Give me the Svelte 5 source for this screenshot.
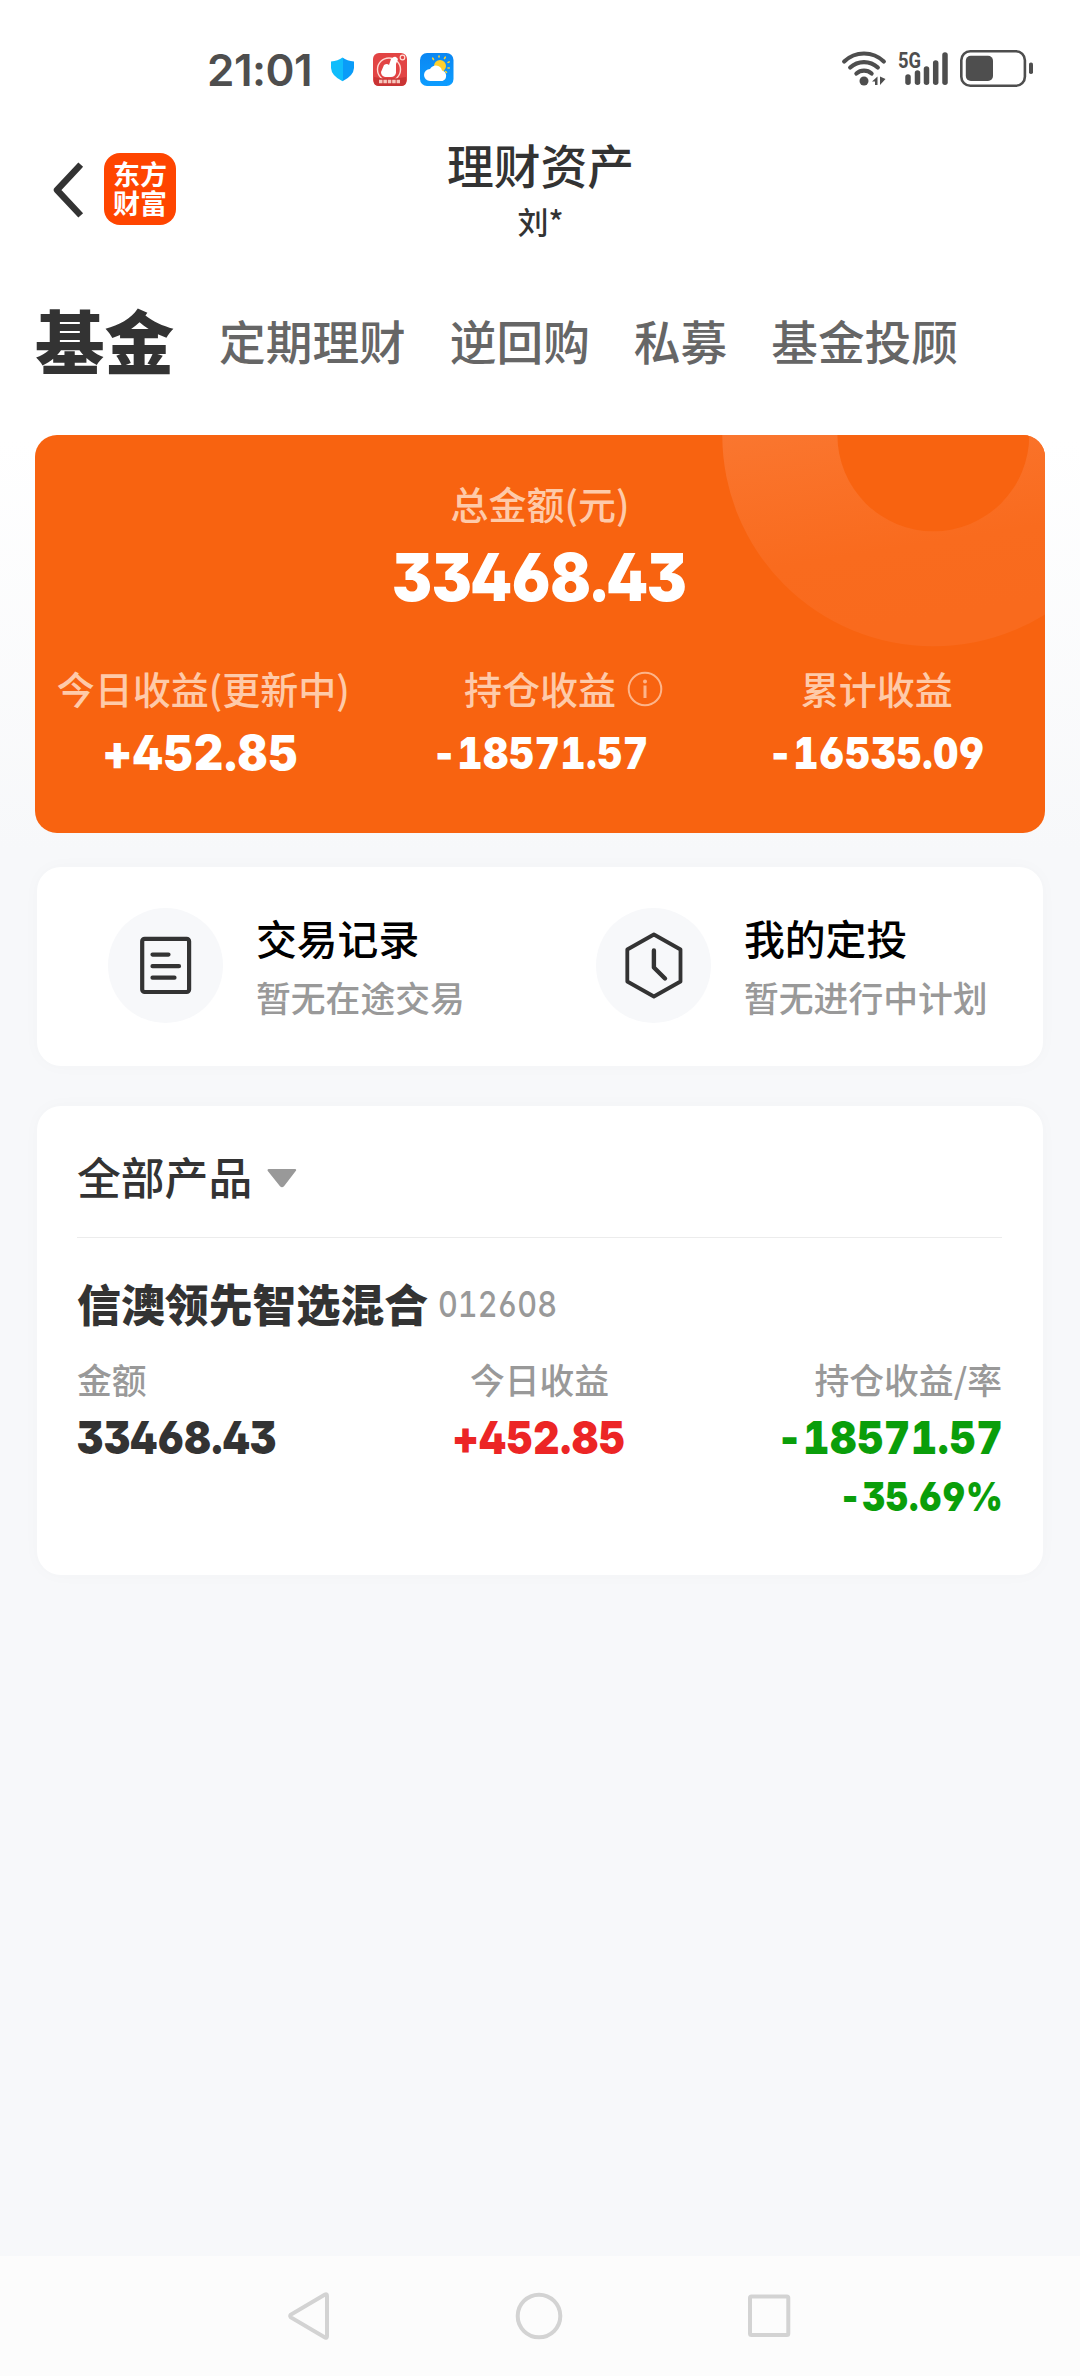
<script>
  const tabs = ['定期理财', '逆回购', '私募', '基金投顾'];
  const bars = [
    { x: 908, top: 77 },
    { x: 917.5, top: 73 },
    { x: 926.5, top: 69 },
    { x: 935.7, top: 63 },
    { x: 945, top: 55 }
  ];
</script>

<div class="screen">
  <div class="status">
    <span class="time num">21:01</span>
    <svg class="apps" width="130" height="44" viewBox="326 48 130 44">
      <defs>
        <linearGradient id="sh" x1="0" x2="1"><stop offset=".5" stop-color="#10bdfb" /><stop offset=".5" stop-color="#0a9cf8" /></linearGradient>
        <linearGradient id="sky" x1="0" y1="0" x2="0" y2="1"><stop offset="0" stop-color="#0a86f2" /><stop offset="1" stop-color="#0d9dff" /></linearGradient>
      </defs>
      <path d="M342.500 57.500Q347 61 354 61.500V68Q353.500 76 342.500 81.200Q331.500 76 331 68V61.500Q338 61 342.500 57.500Z" fill="url(#sh)" />
      <rect x="373" y="53" width="34" height="33" rx="6" fill="#e24444" />
      <circle cx="389" cy="69.500" r="11.500" fill="none" stroke="#ffd9d3" stroke-width="1.400" />
      <path d="M384 65q3-2 5 0l2-6q3-3 5-2l2 2-2 5v9q-1 4-5 4h-6q-4-1-4-5z" fill="#fff" />
      <path d="M374 77q15 3 32 0v6q-1 3-5 3h-22q-4 0-5-3z" fill="#c93434" />
      <path d="M379 81.500h21" stroke="#f7c7bd" stroke-width="3.500" stroke-dasharray="3.500 .9" />
      <circle cx="402.500" cy="57.500" r="2.300" fill="none" stroke="#ffe0d8" stroke-width="1.200" />
      <rect x="420" y="53" width="33.500" height="33" rx="7" fill="url(#sky)" />
      <circle cx="440" cy="66" r="6" fill="#ffd02d" />
      <g stroke="#ffd02d" stroke-width="1.600" stroke-linecap="round"><path d="M439 57v-1M444.500 58.500l.8-1.300M448 62.500l1.200-.6M448 68h1.300M445.500 71.500l1 .8M433.500 59.500l-.8-1.300" /></g>
      <path d="M430 81a6 6 0 0 1 0-12q2-3.500 6-3.500 5 .5 6 5a5.500 5.500 0 0 1 .5 10.500z" fill="#fff" />
    </svg>
    <svg class="sys" width="204" height="48" viewBox="836 46 204 48">
      <g fill="none" stroke="#4e4e4e" stroke-width="4.200" stroke-linecap="round">
        <path d="M844.200 61.500a28.500 28.500 0 0 1 39.600 0M850.200 67.600a20 20 0 0 1 27.600 0M856.400 73.500a11.500 11.500 0 0 1 15.200 0" />
      </g>
      <circle cx="864" cy="81" r="4.500" fill="#4e4e4e" />
      <path d="M872 81.500l5.500-5v8.500h-2.500v-3.500zM880 76.500l5.500 2.500-5.500 6z" fill="#4e4e4e" />
      <text x="898" y="68" class="net" textLength="23" lengthAdjust="spacingAndGlyphs">5G</text>
      {#each bars as b}
        <path d={`M${b.x} ${b.top}V82.300`} stroke="#4e4e4e" stroke-width="5.500" stroke-linecap="round" />
      {/each}
      <rect x="961.300" y="51.200" width="63.600" height="34.600" rx="9" fill="none" stroke="#4e4e4e" stroke-width="2.600" />
      <rect x="965.800" y="55.800" width="27.200" height="25.200" rx="5" fill="#4e4e4e" />
      <rect x="1029" y="62.500" width="4" height="11.500" rx="1.800" fill="#4e4e4e" />
    </svg>
  </div>

  <header>
    <svg class="back" width="36" height="60" viewBox="50 160 36 60"><path d="M78.500 167L57 190L78.500 213" fill="none" stroke="#333" stroke-width="6.500" stroke-linecap="square" stroke-linejoin="round" /></svg>
    <div class="logo">东方<br />财富</div>
    <div class="title">
      <h1>理财资产</h1>
      <p>刘*</p>
    </div>
  </header>

  <nav class="tabs">
    <strong>基金</strong>
    {#each tabs as t}<span>{t}</span>{/each}
  </nav>

  <main>
    <section class="total">
      <svg class="rings" width="324" height="212" viewBox="0 0 324 212">
        <defs><linearGradient id="ring" x1="0" y1=".5" x2=".08" y2="1"><stop offset="0" stop-color="#fa762f" /><stop offset=".65" stop-color="#f96b1e" /><stop offset="1" stop-color="#f96a1d" /></linearGradient></defs>
        <circle cx="212" cy="0" r="211.700" fill="url(#ring)" />
        <circle cx="212" cy="0" r="96.200" fill="#f86310" />
      </svg>
      <div class="label">总金额(元)</div>
      <div class="sum num">33468.43</div>
      <div class="cols">
        <div><div class="label">今日收益(更新中)</div><div class="val num big">+452.85</div></div>
        <div>
          <div class="label held">持仓收益<svg class="info" width="36" height="36" viewBox="0 0 36 36"><circle cx="18" cy="18" r="16.300" fill="none" stroke="#fdb48a" stroke-width="2" /><path d="M18 14.500V27" stroke="#fdb48a" stroke-width="3" /><circle cx="18" cy="10.500" r="2" fill="#fdb48a" /></svg></div>
          <div class="val num">-18571.57</div>
        </div>
        <div><div class="label">累计收益</div><div class="val num">-16535.09</div></div>
      </div>
    </section>

    <section class="card quick">
      <div class="item">
        <div class="disc">
          <svg width="60" height="70" viewBox="136 931 60 70" fill="none" stroke="#333" stroke-width="4.200" stroke-linecap="round"><rect x="142.200" y="938.800" width="46.900" height="53.200" rx="2.500" /><path d="M152.500 954.600h16M152.500 966.200h26.500M152.500 977.700h22" /></svg>
        </div>
        <div><div class="name">交易记录</div><div class="sub">暂无在途交易</div></div>
      </div>
      <div class="item">
        <div class="disc">
          <svg width="68" height="70" viewBox="619.500 931 68 70" fill="none" stroke="#333" stroke-width="3.800" stroke-linecap="round" stroke-linejoin="round"><path d="M653.400 934.500L680 949.500V981.500L653.400 996.500L626.800 981.500V949.500Z" /><path d="M653.400 950.500V967.500L664.500 978.500" stroke-width="4.400" /></svg>
        </div>
        <div><div class="name">我的定投</div><div class="sub">暂无进行中计划</div></div>
      </div>
    </section>

    <section class="card products">
      <div class="filter">全部产品<svg width="30" height="19" viewBox="0 0 30 19"><path d="M1.500 0h26.500q2 .3.700 2L17 17.300q-2 1.800-4 0L.8 2Q0 .5 1.500 0z" fill="#999" /></svg></div>
      <div class="fund"><b>信澳领先智选混合</b><span class="num">012608</span></div>
      <div class="grid">
        <div><div class="key">金额</div><div class="fig num">33468.43</div></div>
        <div class="mid"><div class="key">今日收益</div><div class="fig num up">+452.85</div></div>
        <div class="end"><div class="key">持仓收益/率</div><div class="fig num down">-18571.57</div><div class="pct num">-35.69%</div></div>
      </div>
    </section>
  </main>

  <footer>
    <svg width="50" height="56" viewBox="284 2288 50 56"><path d="M325 2294.500Q327 2293.500 327 2296V2336Q327 2338.500 325 2337.500L291 2317.500Q289.500 2316 291 2314.500Z" fill="none" stroke="#d3d3d3" stroke-width="4" /></svg>
    <svg width="50" height="56" viewBox="515 2288 50 56"><circle cx="540" cy="2316" r="21.300" fill="none" stroke="#d3d3d3" stroke-width="4" /></svg>
    <svg width="50" height="56" viewBox="744 2288 50 56"><rect x="750" y="2296.500" width="38.300" height="38.600" rx="1.500" fill="none" stroke="#d3d3d3" stroke-width="4" /></svg>
  </footer>
</div>

<style>
  :global(body) { margin: 0; background: #f7f8fa; }
  .screen {
    width: 1080px;
    height: 2376px;
    display: flex;
    flex-direction: column;
    overflow: hidden;
    font-family: 'Noto Sans CJK SC', sans-serif;
    color: #333;
    background: linear-gradient(#fff 0, #fff 440px, #f7f8fa 850px);
  }
  svg { display: block; flex: none; }
  .num { font-family: Inter, 'Noto Sans CJK SC', sans-serif; font-feature-settings: 'ss01', 'cv02', 'cv03', 'cv04'; white-space: nowrap; }
  /* Condensed tabular figures */
  .sum, .val, .fig, .pct, .fund span { font-feature-settings: 'ss01', 'cv02', 'cv03', 'cv04', 'tnum'; font-weight: 900; letter-spacing: 0.02em; transform: scaleX(0.88); }

  .status { height: 140px; box-sizing: border-box; padding: 46px 40px 0 207px; display: flex; align-items: flex-start; color: #4e4e4e; }
  .time { width: 119px; font-size: 44px; line-height: 48px; font-weight: 600; letter-spacing: -0.5px; }
  .apps { margin-top: 2px; }
  .sys { margin-left: auto; }
  .net { font: 700 22px Roboto, sans-serif; fill: #4e4e4e; }

  header { height: 150px; display: grid; grid-template-columns: 54px 212px 1fr 315px; padding-left: 50px; box-sizing: border-box; }
  .back { margin-top: 20px; }
  .logo { width: 72px; height: 72px; margin-top: 13px; border-radius: 16px; background: #ff4500; color: #fff; box-sizing: border-box; padding-top: 6px; text-align: center; font-size: 27px; line-height: 29px; font-weight: 700; }
  .title { text-align: center; }
  h1 { margin: -3px 0 0; font-size: 46.8px; line-height: 54px; font-weight: 500; }
  p { margin: 14px 0 0; font-size: 31px; line-height: 32px; font-weight: 500; }

  .tabs { height: 145px; box-sizing: border-box; padding-left: 35px; display: flex; align-items: flex-start; font-size: 46.700px; line-height: 60px; color: #666; font-weight: 500; }
  .tabs strong { width: 184px; padding-top: 2px; font-size: 69.500px; line-height: 94px; color: #333; font-weight: 900; }
  .tabs span { margin: 20px 44px 0 0; }

  main { flex: 1; padding: 0 35px; }
  .total { position: relative; height: 398px; border-radius: 22px; background: #f86310; overflow: hidden; color: #fff; text-align: center; padding-top: 43px; box-sizing: border-box; }
  .rings { position: absolute; right: 0; top: 0; width: 323px; }
  .total > .label, .total > .sum, .cols { position: relative; }
  .label { font-size: 38px; line-height: 50px; color: #fecaa9; white-space: nowrap; font-weight: 500; }
  .sum { font-size: 66px; line-height: 70px; margin-top: 14px; transform: scaleX(0.91); letter-spacing: 0.015em; }
  .cols { display: grid; grid-template-columns: repeat(3, 1fr); margin-top: 51px; }
  .held { position: relative; }
  .info { position: absolute; left: 255px; top: 8px; }
  .val { font-size: 44px; line-height: 60px; margin-top: 10px; }
  .val.big { font-size: 48px; transform: scaleX(0.94); letter-spacing: 0.03em; margin-left: -5px; }

  .card { margin: 0 2px; background: #fff; border-radius: 24px; box-shadow: 0 0 18px rgba(0, 0, 0, 0.025); box-sizing: border-box; }
  .quick { height: 199px; margin-top: 34px; display: grid; grid-template-columns: 488px 1fr; padding: 41px 0 0 71px; }
  .item { display: flex; gap: 33px; }
  .disc { width: 115px; height: 115px; border-radius: 50%; background: #f7f8fa; display: flex; align-items: center; justify-content: center; }
  .name { font-size: 40.800px; line-height: 50px; font-weight: 500; color: #000; margin-top: 5px; }
  .sub { font-size: 34.800px; line-height: 44px; color: #999; margin-top: 12px; font-weight: 500; }

  .products { height: 469px; margin-top: 40px; padding: 0 41px 0 40px; }
  .filter { height: 132px; box-sizing: border-box; border-bottom: 1px solid #ececec; display: flex; align-items: center; gap: 15px; font-size: 43.800px; line-height: 60px; font-weight: 500; padding-top: 9px; }
  .filter svg { margin-top: 4px; }
  .fund { display: flex; align-items: center; gap: 10px; height: 60px; margin-top: 35px; }
  .fund b { font-size: 43.900px; line-height: 60px; font-weight: 900; }
  .fund span { font-size: 36px; font-weight: 450; letter-spacing: 0; color: #999; transform: scaleX(0.85); transform-origin: left; padding-top: 1px; }
  .grid { display: grid; grid-template-columns: 1fr 1fr 1fr; margin-top: 18px; }
  .key { font-size: 34.800px; line-height: 56px; color: #999; font-weight: 500; }
  .fig { font-size: 46px; line-height: 50px; margin-top: 5px; transform-origin: left; }
  .pct { font-size: 40px; line-height: 48px; margin-top: 11px; color: #0a9e0a; }
  .mid { text-align: center; }
  .mid .fig { transform-origin: center; }
  .end { text-align: right; }
  .end .num { transform-origin: right; margin-right: -1px; }
  .up { color: #ec2525; }
  .down { color: #0a9e0a; }

  footer { height: 120px; box-sizing: border-box; background: #fcfcfc; display: flex; justify-content: space-between; padding: 32px 286px 0 284px; }
</style>
